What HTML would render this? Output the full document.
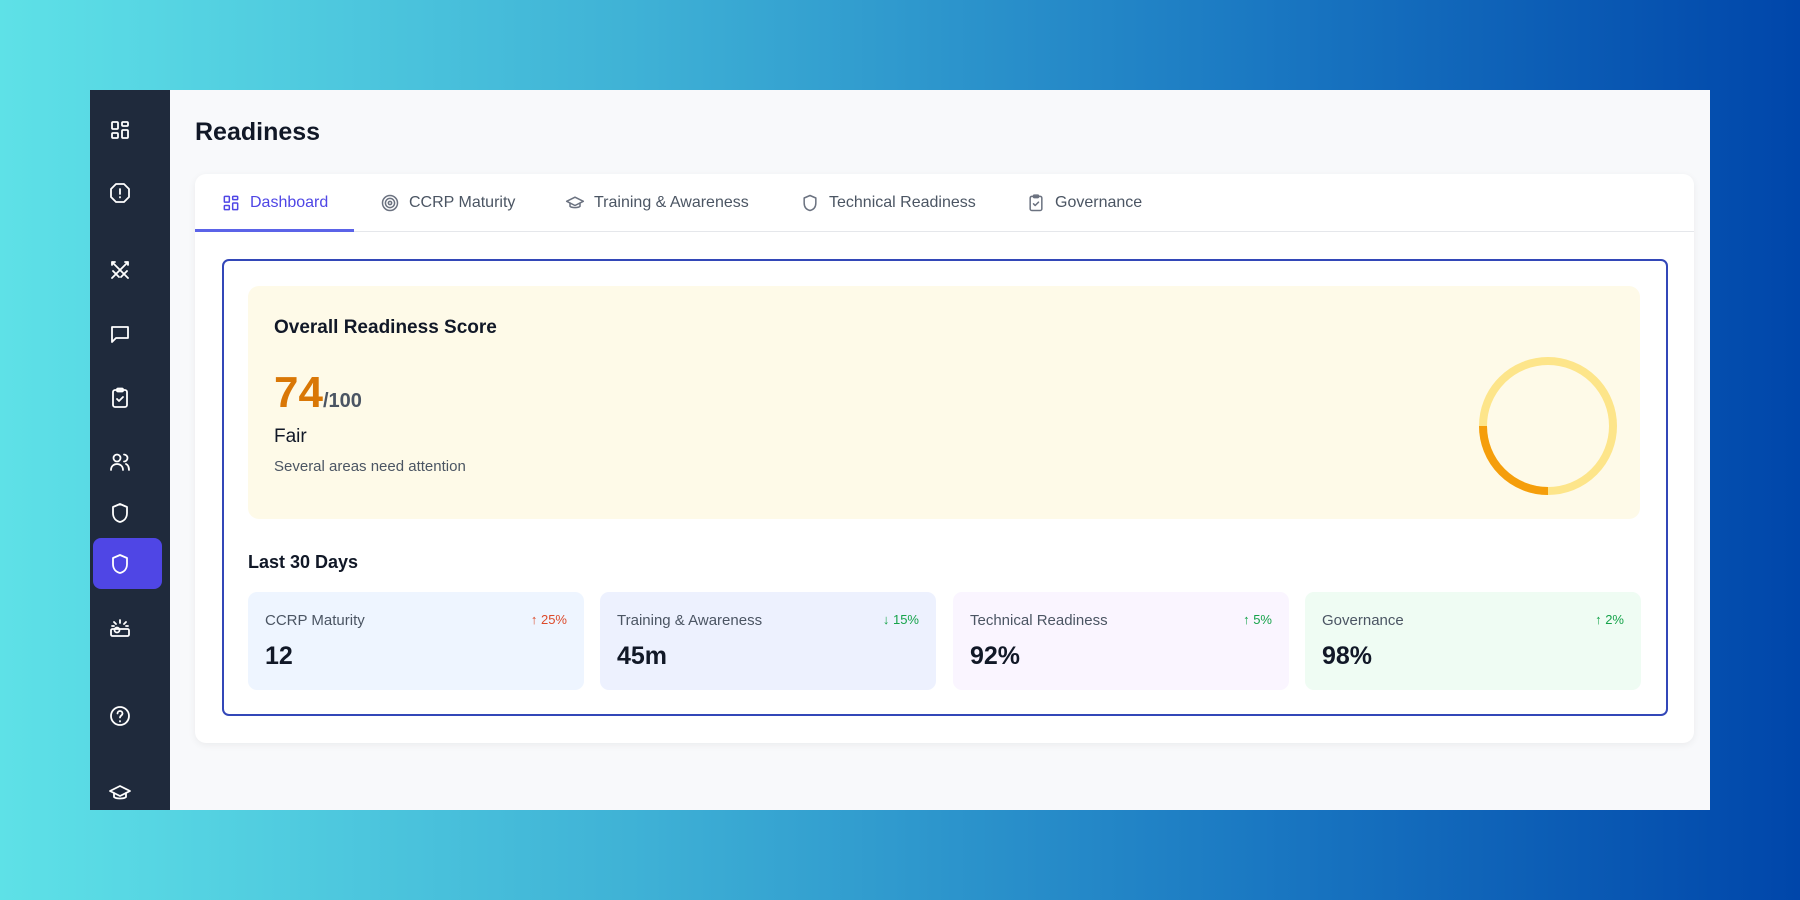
<!DOCTYPE html>
<html><head><meta charset="utf-8"><style>
*{box-sizing:border-box;margin:0;padding:0}
body{width:1800px;height:900px;overflow:hidden;font-family:"Liberation Sans",sans-serif;background:linear-gradient(90deg,#5ee1e7 0%,#3fb2d6 35%,#1a78c2 70%,#0046aa 100%);position:relative}
.frame{position:absolute;left:90px;top:90px;width:1620px;height:720px;background:#f8f9fb;overflow:hidden}
.side{position:absolute;left:0;top:0;width:80px;height:720px;background:#1f2a3c}
.si{position:absolute;left:18px;width:24px;height:24px}
.si svg{width:24px;height:24px;fill:none;stroke:#fff;stroke-width:1.8;stroke-linecap:round;stroke-linejoin:round}
.active{position:absolute;left:3px;top:448px;width:69px;height:51px;background:#4f46e5;border-radius:8px}
h1{position:absolute;left:105px;top:28px;font-size:25px;font-weight:700;color:#111827}
.card{position:absolute;left:105px;top:84px;width:1499px;height:569px;background:#fff;border-radius:11px;box-shadow:0 2px 8px rgba(0,0,0,.06)}
.tabs{position:absolute;left:0;top:0;width:100%;height:58px;border-bottom:1px solid #e5e7eb}
.tab{position:absolute;top:19px;font-size:16px;color:#4b5563;display:flex;align-items:center}
.tab svg{width:20px;height:20px;fill:none;stroke:#6b7280;stroke-width:1.8;stroke-linecap:round;stroke-linejoin:round;margin-right:9px}
.tab.on{color:#4f46e5}.tab.on svg{stroke:#4f46e5}
.ul{position:absolute;left:0;top:55px;width:159px;height:3px;background:#5b63e8}
.box{position:absolute;left:27px;top:85px;width:1446px;height:457px;border:2px solid #3347b8;border-radius:7px}
.yel{position:absolute;left:24px;top:25px;width:1392px;height:233px;background:#fefae8;border-radius:11px}
.t1{position:absolute;left:26px;top:31px;font-size:19px;font-weight:700;color:#111827}
.score{position:absolute;left:26px;top:82px;color:#d97706;font-size:44px;font-weight:700}
.score span{font-size:20px;color:#4b5563;font-weight:700}
.fair{position:absolute;left:26px;top:140px;font-size:19px;color:#111827}
.sub{position:absolute;left:26px;top:172px;font-size:15px;color:#4b5563}
.ring{position:absolute;left:1230px;top:70px}
.l30{position:absolute;left:24px;top:291px;font-size:18px;font-weight:700;color:#111827}
.st{position:absolute;top:331px;width:336px;height:98px;border-radius:9px}
.st .lb{position:absolute;left:17px;top:20px;font-size:15px;color:#4b5563}
.st .v{position:absolute;left:17px;top:50px;font-size:25px;font-weight:700;color:#111827}
.st .ch{position:absolute;right:17px;top:20px;font-size:13px}
</style></head><body>
<div class="frame">
 <div class="side">
  <div class="active"></div>
  <div class="si" style="top:28px"><svg viewBox="0 0 24 24"><rect x="4" y="4" width="6" height="7" rx="1"/><rect x="14" y="4" width="6" height="4" rx="1"/><rect x="4" y="15" width="6" height="5" rx="1"/><rect x="14" y="12" width="6" height="8" rx="1"/></svg></div>
  <div class="si" style="top:91px"><svg viewBox="0 0 24 24"><path d="M8 3h8l5 5v8l-5 5H8l-5-5V8z"/><path d="M12 8v5M12 16v.5"/></svg></div>
  <div class="si" style="top:168px"><svg viewBox="0 0 24 24"><path d="M4 4l10 10M14 14l3 3M4 4h3M4 4v3M20 4L10 14M20 4h-3M20 4v3M7 17l3-3M17 17l3 3M7 17l-3 3M5 13l6 6M19 13l-6 6"/></svg></div>
  <div class="si" style="top:232px"><svg viewBox="0 0 24 24"><path d="M4 5h16v11H8l-4 4z"/></svg></div>
  <div class="si" style="top:296px"><svg viewBox="0 0 24 24"><rect x="5" y="4" width="14" height="17" rx="2"/><rect x="9" y="2.5" width="6" height="3" rx="1"/><path d="M9 13l2 2 4-4"/></svg></div>
  <div class="si" style="top:360px"><svg viewBox="0 0 24 24"><circle cx="9" cy="8" r="3.5"/><path d="M3 20c0-4 3-6 6-6s6 2 6 6M16 4.5a3.5 3.5 0 010 7M18 14c2 1 3 3 3 6"/></svg></div>
  <div class="si" style="top:411px"><svg viewBox="0 0 24 24"><path d="M12 3l7 3v6c0 5-3 8-7 9-4-1-7-4-7-9V6z"/></svg></div>
  <div class="si" style="top:462px"><svg viewBox="0 0 24 24"><path d="M12 3l7 3v6c0 5-3 8-7 9-4-1-7-4-7-9V6z"/></svg></div>
  <div class="si" style="top:526px"><svg viewBox="0 0 24 24"><rect x="3" y="13" width="18" height="7" rx="1.5"/><circle cx="9" cy="14" r="2.5"/><path d="M12 4v3M6 6l2 2M18 6l-2 2M4 10h2M18 10h2"/></svg></div>
  <div class="si" style="top:614px"><svg viewBox="0 0 24 24"><circle cx="12" cy="12" r="9"/><path d="M9.5 9.5a2.5 2.5 0 015 0c0 2-2.5 2-2.5 4M12 17v.5"/></svg></div>
  <div class="si" style="top:691px"><svg viewBox="0 0 24 24"><path d="M2 10l10-5 10 5-10 5z"/><path d="M6 12v4c2 2 10 2 12 0v-4"/></svg></div>
 </div>
 <h1>Readiness</h1>
 <div class="card">
  <div class="tabs">
   <div class="tab on" style="left:26px"><svg viewBox="0 0 24 24"><rect x="4" y="4" width="6" height="7" rx="1"/><rect x="14" y="4" width="6" height="4" rx="1"/><rect x="4" y="15" width="6" height="5" rx="1"/><rect x="14" y="12" width="6" height="8" rx="1"/></svg>Dashboard</div>
   <div class="tab" style="left:185px"><svg viewBox="0 0 24 24"><circle cx="12" cy="12" r="9"/><circle cx="12" cy="12" r="5.5"/><circle cx="12" cy="12" r="2"/></svg>CCRP Maturity</div>
   <div class="tab" style="left:370px"><svg viewBox="0 0 24 24"><path d="M2 10l10-5 10 5-10 5z"/><path d="M6 12v4c2 2 10 2 12 0v-4"/></svg>Training &amp; Awareness</div>
   <div class="tab" style="left:605px"><svg viewBox="0 0 24 24"><path d="M12 3l7 3v6c0 5-3 8-7 9-4-1-7-4-7-9V6z"/></svg>Technical Readiness</div>
   <div class="tab" style="left:831px"><svg viewBox="0 0 24 24"><rect x="5" y="4" width="14" height="17" rx="2"/><rect x="9" y="2.5" width="6" height="3" rx="1"/><path d="M9 13l2 2 4-4"/></svg>Governance</div>
   <div class="ul"></div>
  </div>
  <div class="box">
   <div class="yel">
    <div class="t1">Overall Readiness Score</div>
    <div class="score">74<span>/100</span></div>
    <div class="fair">Fair</div>
    <div class="sub">Several areas need attention</div>
    <svg class="ring" width="140" height="140" viewBox="0 0 140 140"><circle cx="70" cy="70" r="65" fill="none" stroke="#fde58a" stroke-width="8"/><path d="M5 70A65 65 0 0 0 70 135" fill="none" stroke="#f59e0b" stroke-width="8"/></svg>
   </div>
   <div class="l30">Last 30 Days</div>
   <div class="st" style="left:24px;background:#eef5ff"><div class="lb">CCRP Maturity</div><div class="ch" style="color:#dc4a2a">↑ 25%</div><div class="v">12</div></div>
   <div class="st" style="left:376px;background:#edf1fe"><div class="lb">Training &amp; Awareness</div><div class="ch" style="color:#16a34a">↓ 15%</div><div class="v">45m</div></div>
   <div class="st" style="left:729px;background:#faf5ff"><div class="lb">Technical Readiness</div><div class="ch" style="color:#16a34a">↑ 5%</div><div class="v">92%</div></div>
   <div class="st" style="left:1081px;background:#effcf3"><div class="lb">Governance</div><div class="ch" style="color:#16a34a">↑ 2%</div><div class="v">98%</div></div>
  </div>
 </div>
</div>
</body></html>
